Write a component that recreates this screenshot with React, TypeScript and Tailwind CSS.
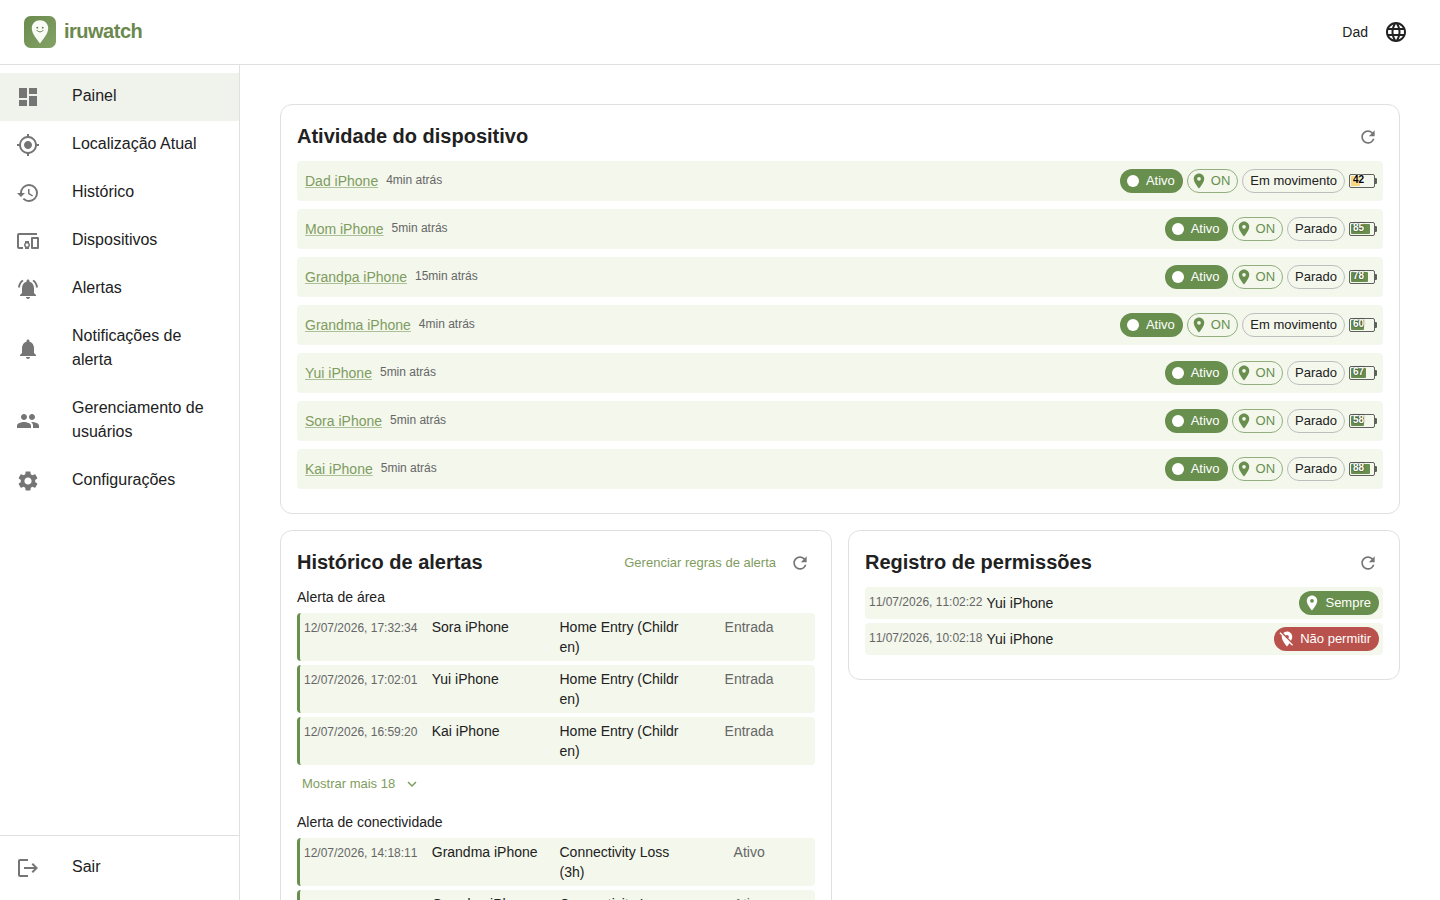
import React from 'react';
import {
  MdDashboard,
  MdMyLocation,
  MdHistory,
  MdDevicesOther,
  MdNotificationsActive,
  MdNotifications,
  MdPeople,
  MdSettings,
  MdLogout,
  MdLanguage,
  MdRefresh,
  MdExpandMore,
  MdLocationOn,
  MdLocationOff,
  MdFiberManualRecord,
} from 'react-icons/md';

const menuItems = [
  { label: 'Painel', icon: MdDashboard },
  { label: 'Localização Atual', icon: MdMyLocation },
  { label: 'Histórico', icon: MdHistory },
  { label: 'Dispositivos', icon: MdDevicesOther },
  { label: 'Alertas', icon: MdNotificationsActive },
  { label: 'Notificações de alerta', icon: MdNotifications },
  { label: 'Gerenciamento de usuários', icon: MdPeople },
  { label: 'Configurações', icon: MdSettings },
];

const devices = [
  { name: 'Dad iPhone', time: '4min atrás', moving: true, battery: 42 },
  { name: 'Mom iPhone', time: '5min atrás', moving: false, battery: 85 },
  { name: 'Grandpa iPhone', time: '15min atrás', moving: false, battery: 78 },
  { name: 'Grandma iPhone', time: '4min atrás', moving: true, battery: 60 },
  { name: 'Yui iPhone', time: '5min atrás', moving: false, battery: 67 },
  { name: 'Sora iPhone', time: '5min atrás', moving: false, battery: 58 },
  { name: 'Kai iPhone', time: '5min atrás', moving: false, battery: 88 },
];

const areaAlerts = [
  { time: '12/07/2026, 17:32:34', device: 'Sora iPhone', rule: 'Home Entry (Children)', status: 'Entrada' },
  { time: '12/07/2026, 17:02:01', device: 'Yui iPhone', rule: 'Home Entry (Children)', status: 'Entrada' },
  { time: '12/07/2026, 16:59:20', device: 'Kai iPhone', rule: 'Home Entry (Children)', status: 'Entrada' },
];

const connectivityAlerts = [
  { time: '12/07/2026, 14:18:11', device: 'Grandma iPhone', rule: 'Connectivity Loss (3h)', status: 'Ativo' },
  { time: '12/07/2026, 11:18:11', device: 'Grandpa iPhone', rule: 'Connectivity Loss (3h)', status: 'Ativo' },
];

const Logo = () => (
  <svg width="32" height="32" viewBox="0 0 32 32">
    <defs>
      <linearGradient id="logoBg" x1="0" y1="0" x2="1" y2="1">
        <stop offset="0" stopColor="#6a8b4e" />
        <stop offset="1" stopColor="#84a266" />
      </linearGradient>
    </defs>
    <rect width="32" height="32" rx="6.5" fill="url(#logoBg)" />
    <path d="M16 4.2c-4.6 0-8.2 3.5-8.2 8 0 5.400 4.700 10.400 8.200 15.300 3.500-4.900 8.200-9.900 8.200-15.300 0-4.500-3.600-8-8.200-8z" fill="#f8faf5" />
    <circle cx="13.300" cy="11.700" r="0.900" fill="#5b7a45" />
    <circle cx="18.700" cy="11.700" r="0.900" fill="#5b7a45" />
    <path d="M12.900 14.400c1.500 2 4.700 2 6.200 0" fill="none" stroke="#5b7a45" strokeWidth="0.900" strokeLinecap="round" />
  </svg>
);

const CardTitle = ({ children }: { children: React.ReactNode }) => (
  <h2 className="-mt-px mb-px text-xl font-bold">{children}</h2>
);

const RefreshButton = () => (
  <button className="p-[5px] text-[#757575]">
    <MdRefresh size={20} />
  </button>
);

const Battery = ({ level }: { level: number }) => {
  const low = level < 50;
  return (
    <div className="relative h-3.5 w-[26px] rounded-[2px] border border-[#5f625c]">
      <div className="absolute top-px bottom-px left-px w-[22px]">
        <div
          className={`h-full rounded-[1px] ${low ? 'bg-[#fbd57e]' : 'bg-[#688f4e]'}`}
          style={{ width: `${level}%` }}
        />
      </div>
      <span
        className={`absolute -top-px left-[3px] text-[10px] leading-3 font-bold ${
          low ? 'text-black [text-shadow:0_0_2px_#fff]' : 'text-white [text-shadow:0_0_2px_rgba(0,0,0,0.7)]'
        }`}
      >
        {level}
      </span>
      <div className="absolute top-[3px] -right-[3px] h-1.5 w-0.5 rounded-r-[1px] bg-[#5f625c]" />
    </div>
  );
};

const AlertRow = ({ alert }: { alert: (typeof areaAlerts)[number] }) => (
  <div className="grid grid-cols-4 gap-1 rounded-[4px] border-l-[3px] border-[#688f4e] bg-[#f3f7ec] p-1 text-sm leading-5">
    <span className="pt-px text-xs leading-5 whitespace-nowrap text-[#666] [font-kerning:none]">{alert.time}</span>
    <span>{alert.device}</span>
    <span className="break-all">{alert.rule}</span>
    <span className="text-center text-[#666]">{alert.status}</span>
  </div>
);

const App = () => {
  return (
    <div className="flex h-[900px] flex-col overflow-hidden bg-white font-['Liberation_Sans',Arial,sans-serif] text-[#212121]">
      <header className="flex h-[65px] shrink-0 items-center justify-between border-b border-[#e0e0e0] px-6">
        <div className="flex items-center gap-2">
          <Logo />
          <span className="-mt-px mb-px text-xl font-bold tracking-[-0.5px] text-[#6b894e]">iruwatch</span>
        </div>
        <div className="flex items-center gap-2">
          <span className="text-sm">Dad</span>
          <button className="p-2">
            <MdLanguage size={24} />
          </button>
        </div>
      </header>

      <div className="flex min-h-0 flex-1">
        {/* Sidebar */}
        <aside className="flex w-60 shrink-0 flex-col justify-between border-r border-[#e0e0e0]">
          <nav className="py-2">
            {menuItems.map(({ label, icon: Icon }, index) => (
              <a
                key={label}
                className={`flex items-center px-4 py-3 ${index === 0 ? 'bg-[#f0f3ec]' : ''}`}
              >
                <span className="w-14 shrink-0 text-[#757575]">
                  <Icon size={24} />
                </span>
                <span className="-mt-px mb-px text-base">{label}</span>
              </a>
            ))}
          </nav>
          <div className="border-t border-[#e0e0e0] py-2">
            <a className="flex items-center px-4 py-3">
              <span className="w-14 shrink-0 text-[#757575]">
                <MdLogout size={24} />
              </span>
              <span className="-mt-px mb-px text-base">Sair</span>
            </a>
          </div>
        </aside>

        {/* Main Content */}
        <main className="flex-1 px-10 pt-[39px]">
          <section className="rounded-xl border border-[#e0e0e0] px-4 pt-4 pb-6">
            <div className="mb-2 flex h-8 items-center justify-between">
              <CardTitle>Atividade do dispositivo</CardTitle>
              <RefreshButton />
            </div>
            <div className="flex flex-col gap-2">
              {devices.map((device) => (
                <div key={device.name} className="flex h-10 items-center justify-between rounded-[4px] bg-[#f3f7ec] px-2">
                  <div className="flex items-center gap-2">
                    <a className="text-sm text-[#7f9c60] underline decoration-[#7f9c60]/60">{device.name}</a>
                    <span className="-mt-px mb-px text-xs leading-5 text-[#666]">{device.time}</span>
                  </div>
                  <div className="flex items-center gap-1">
                    <span className="flex h-6 items-center rounded-full bg-[#688f4e] pr-2 pl-1 text-[13px] text-white">
                      <MdFiberManualRecord size={18} className="mr-1" />
                      Ativo
                    </span>
                    <span className="flex h-6 items-center rounded-full border border-[#93ae7f] pr-[7px] pl-0.5 text-[13px] text-[#688f4e]">
                      <MdLocationOn size={18} className="mr-[3px]" />
                      ON
                    </span>
                    <span className="flex h-6 items-center rounded-full border border-[#bdbdbd] px-[7px] text-[13px]">
                      {device.moving ? 'Em movimento' : 'Parado'}
                    </span>
                    <Battery level={device.battery} />
                  </div>
                </div>
              ))}
            </div>
          </section>

          <div className="mt-4 grid grid-cols-2 items-start gap-4">
            <section className="rounded-xl border border-[#e0e0e0] px-4 pt-4 pb-6">
              <div className="mb-[7px] flex h-8 items-center justify-between">
                <CardTitle>Histórico de alertas</CardTitle>
                <div className="flex items-center gap-[9px]">
                  <a className="text-[13px] text-[#7f9c60]">Gerenciar regras de alerta</a>
                  <RefreshButton />
                </div>
              </div>
              <h3 className="mb-[5px] text-sm leading-[22px]">Alerta de área</h3>
              <div className="flex flex-col gap-1">
                {areaAlerts.map((alert) => (
                  <AlertRow key={alert.time} alert={alert} />
                ))}
              </div>
              <button className="mt-1 flex items-center gap-2 px-[5px] py-1 text-[13px] leading-[22px] text-[#7f9c60]">
                Mostrar mais 18
                <MdExpandMore size={18} />
              </button>
              <h3 className="mt-3 mb-[5px] text-sm leading-[22px]">Alerta de conectividade</h3>
              <div className="flex flex-col gap-1">
                {connectivityAlerts.map((alert) => (
                  <AlertRow key={alert.time} alert={alert} />
                ))}
              </div>
            </section>

            <section className="rounded-xl border border-[#e0e0e0] px-4 pt-4 pb-6">
              <div className="mb-2 flex h-8 items-center justify-between">
                <CardTitle>Registro de permissões</CardTitle>
                <RefreshButton />
              </div>
              <div className="flex flex-col gap-1">
                <div className="flex h-8 items-center gap-1 rounded-[4px] bg-[#f3f7ec] px-1">
                  <span className="-mt-px mb-px text-xs leading-5 text-[#666] [font-kerning:none]">11/07/2026, 11:02:22</span>
                  <span className="flex-1 text-sm">Yui iPhone</span>
                  <span className="flex h-6 items-center rounded-full bg-[#688f4e] pr-2 pl-1 text-[13px] text-white">
                    <MdLocationOn size={18} className="mr-1" />
                    Sempre
                  </span>
                </div>
                <div className="flex h-8 items-center gap-1 rounded-[4px] bg-[#f3f7ec] px-1">
                  <span className="-mt-px mb-px text-xs leading-5 text-[#666] [font-kerning:none]">11/07/2026, 10:02:18</span>
                  <span className="flex-1 text-sm">Yui iPhone</span>
                  <span className="flex h-6 items-center rounded-full bg-[#b9524c] pr-2 pl-1 text-[13px] text-white">
                    <MdLocationOff size={18} className="mr-1" />
                    Não permitir
                  </span>
                </div>
              </div>
            </section>
          </div>
        </main>
      </div>
    </div>
  );
};

export default App;
